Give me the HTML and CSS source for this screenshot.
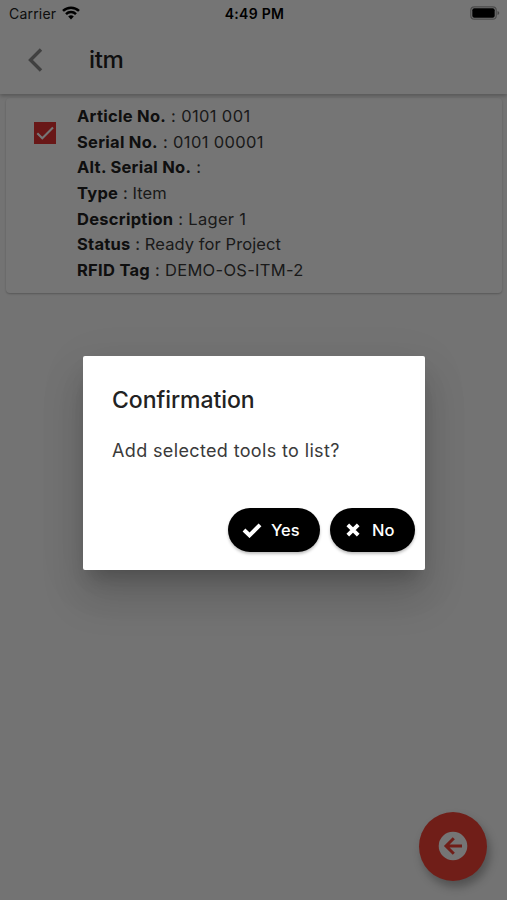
FILE: index.html
```html
<!DOCTYPE html>
<html lang="en">
<head>
<meta charset="utf-8">
<title>itm</title>
<link rel="stylesheet" href="styles.css">
</head>
<body>
<div class="screen">
  <header class="header">
    <div class="status">
      <div class="carrier"><span>Carrier</span>
        <svg class="wifi" viewBox="0 0 18 14" fill="none" stroke="#000" stroke-width="2.5"><path d="M1 4.9a11.5 11.5 0 0 1 16 0M4 8.1a7.2 7.2 0 0 1 10 0"/><path d="M6.2 10.6a4 4 0 0 1 5.6 0L9 13.5z" fill="#000" stroke="none"/></svg>
      </div>
      <span class="time">4:49 PM</span>
      <svg class="battery" viewBox="0 0 30 14"><rect x=".8" y=".8" width="25.4" height="12.4" rx="3.5" fill="none" stroke="#000" stroke-opacity=".36" stroke-width="1.2"/><rect x="2.3" y="2.3" width="22.4" height="9.4" rx="2" fill="#000"/><path d="M27.5 5v4q1.8-.5 1.8-2t-1.8-2" fill="#000" fill-opacity=".4"/></svg>
    </div>
    <div class="toolbar">
      <svg class="back" viewBox="0 0 16 24" fill="none" stroke="#8c8c8c" stroke-width="3.4"><path d="M14 1.5 3.5 12 14 22.5"/></svg>
      <h1>itm</h1>
    </div>
  </header>
  <main class="card">
    <svg class="checkbox" viewBox="0 0 22 22"><path fill="#e53232" d="M0 0h22v22H0z"/><path d="m3.3 11.2 5 5L19 5.4" fill="none" stroke="#fff" stroke-width="2.1"/></svg>
    <div class="details">
      <p class="wide"><b>Article No.</b> : 0101 001</p>
      <p class="wide"><b>Serial No.</b> : 0101 00001</p>
      <p><b>Alt. Serial No.</b> :</p>
      <p class="tight"><b>Type</b> : Item</p>
      <p><b>Description</b> : Lager 1</p>
      <p class="tight"><b>Status</b> : Ready for Project</p>
      <p><b>RFID Tag</b> : DEMO-OS-ITM-2</p>
    </div>
  </main>
  <div class="fab">
    <svg viewBox="0 0 30 30"><circle cx="15" cy="15" r="14.3" fill="#fff"/><path d="M24 15H8.2M15.8 7.3 8 15l7.8 7.7" fill="none" stroke="#f44336" stroke-width="3"/></svg>
  </div>
</div>
<div class="scrim">
  <section class="dialog">
    <h2>Confirmation</h2>
    <p class="message">Add selected tools to list?</p>
    <div class="actions">
      <button class="yes"><svg viewBox="0 0 20 16"><path d="m2 8 5.5 5.3L18 2.8" fill="none" stroke="#fff" stroke-width="4"/></svg><span>Yes</span></button>
      <button class="no"><svg viewBox="0 0 14 14"><path d="m1.8 1.8 10.4 10.4M12.2 1.8 1.8 12.2" fill="none" stroke="#fff" stroke-width="3.8"/></svg><span>No</span></button>
    </div>
  </section>
</div>
</body>
</html>
```
FILE: styles.css
```css
* { box-sizing: border-box; }
body { margin: 0; font-family: Inter, sans-serif; color: #222; }
h1, h2, p { margin: 0; }
.screen { height: 900px; background: #fafafa; overflow: hidden; }
.header { height: 94px; background: #fff; box-shadow: 0 2px 4px rgba(0,0,0,.25); position: relative; z-index: 1; }
.status { height: 27px; display: grid; grid-template-columns: 1fr auto 1fr; align-items: center; padding: 0 7px 0 9px; font-size: 14px; color: #000; }
.carrier { display: flex; align-items: center; gap: 6px; color: #222; letter-spacing: .2px; }
.wifi { width: 18px; height: 14px; margin-top: -1px; }
.time { font-weight: 600; letter-spacing: .3px; }
.battery { width: 30px; height: 14px; margin-top: -1px; justify-self: end; }
.toolbar { height: 66px; display: flex; align-items: center; padding-left: 27px; }
.back { width: 16px; height: 24px; margin-right: 46px; }
h1 { font-size: 24px; line-height: 30px; font-weight: 500; letter-spacing: -.4px; }
.card { margin: 4px 5px 0 6px; height: 195px; display: flex; background: #fff; border-radius: 4px; padding: 6px 0 0 28px; box-shadow: 0 1px 2px rgba(0,0,0,.24); }
.checkbox { width: 22px; height: 22px; margin: 18px 21px 0 0; }
.details { font-size: 16.5px; line-height: 25.65px; letter-spacing: .3px; color: #3a3a3a; }
.details .wide { letter-spacing: .36px; }
.details .tight { letter-spacing: .08px; }
.details b { font-weight: 700; color: #222; letter-spacing: .28px; }
.details .tight b { letter-spacing: .25px; }
.fab { position: absolute; left: 419px; top: 812px; width: 68px; height: 69px; border-radius: 50%; background: #f44336; display: flex; align-items: center; justify-content: center; box-shadow: 3px 6px 10px rgba(0,0,0,.3); }
.fab svg { width: 30px; height: 30px; margin-top: -1px; }
.scrim { position: absolute; inset: 0; z-index: 2; height: 900px; background: rgba(0,0,0,.54); overflow: hidden; }
.dialog { width: 342px; height: 214px; margin: 356px 0 0 83px; padding: 29px 10px 0 29px; background: #fff; border-radius: 2px; box-shadow: 0 14px 18px -8px rgba(0,0,0,.2), 0 26px 40px 3px rgba(0,0,0,.14), 0 10px 50px 8px rgba(0,0,0,.04); }
h2 { font-size: 23px; line-height: 31px; font-weight: 500; letter-spacing: -.05px; }
.message { margin-top: 21px; font-size: 18px; line-height: 28px; letter-spacing: .36px; color: #3a3a3a; }
.actions { display: flex; justify-content: flex-end; gap: 10px; margin-top: 43px; }
button { height: 44px; padding: 0; border: 0; border-radius: 22px; background: #000; color: #fff; display: flex; align-items: center; font: 500 16.5px Inter, sans-serif; letter-spacing: 0; box-shadow: 0 2px 3px rgba(0,0,0,.25); }
.yes { width: 92px; padding-left: 14px; gap: 9px; }
.no { width: 85px; padding-left: 16px; gap: 12px; }
.yes svg { width: 20px; height: 16px; }
.no svg { width: 14px; height: 14px; }
```
